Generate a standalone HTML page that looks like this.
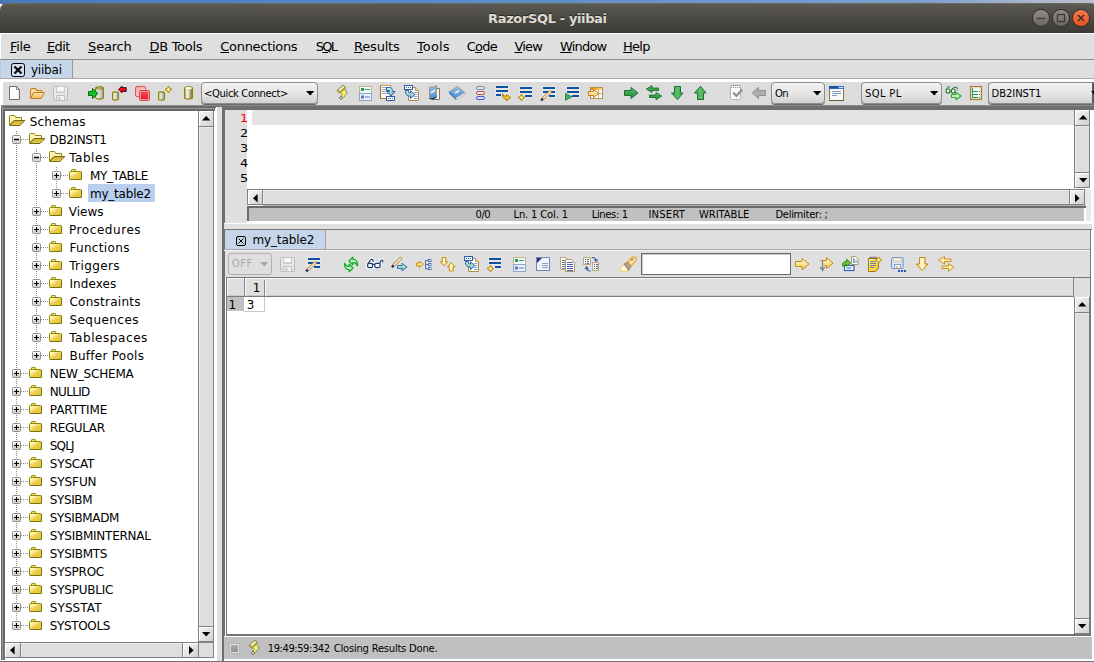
<!DOCTYPE html>
<html lang="en"><head><meta charset="utf-8"><title>RazorSQL - yiibai</title>
<style>
html,body{margin:0;padding:0;}
body{width:1094px;height:662px;overflow:hidden;background:#fff;font-family:"DejaVu Sans","Liberation Sans",sans-serif;}
#app{position:absolute;left:0;top:0;width:1094px;height:662px;overflow:hidden;background:#fff;}
#app div{position:absolute;box-sizing:border-box;}
#app svg{position:absolute;overflow:visible;}
.t{position:absolute;white-space:pre;line-height:normal;}
.t u{text-decoration:underline;text-decoration-thickness:1px;text-underline-offset:1px;}
.g{background:#dfdfdf;}
.btn{background:linear-gradient(135deg,#f4f4f4 0%,#e4e4e4 45%,#cfcfcf 100%);border-top:1px solid #fff;border-left:1px solid #fff;}
.trk{background:#dedede;border-top:1px solid #ececec;border-left:1px solid #ececec;}
.ln{background:#7a7a7a;}
.combo{border:1px solid #8c8c8c;border-radius:4px;background:linear-gradient(#f2f2f2,#e6e6e6 50%,#d2d2d2);box-shadow:0 1px 0 #6a6a6a;}

</style></head><body>
<svg width="0" height="0" style="position:absolute">
<defs>
<linearGradient id="gFold" x1="0" y1="0" x2="1" y2="1"><stop offset="0" stop-color="#ffffd8"/><stop offset="0.22" stop-color="#ffff98"/><stop offset="0.36" stop-color="#ffdc9c"/><stop offset="0.52" stop-color="#ecd048"/><stop offset="1" stop-color="#e2c232"/></linearGradient>
<linearGradient id="gFlap" x1="0" y1="0" x2="0" y2="1"><stop offset="0" stop-color="#cfae2c"/><stop offset="1" stop-color="#e8cc4c"/></linearGradient>
<linearGradient id="gBox" x1="0" y1="0" x2="0" y2="1"><stop offset="0" stop-color="#ffffff"/><stop offset="1" stop-color="#d4ccc0"/></linearGradient>
</defs>
</svg>

<div id="app">
<div style="left:0px;top:0px;width:1094px;height:4px;background:linear-gradient(90deg,#4a78ba 0%,#5f8ecb 50%,#7ea0d0 85%,#aeb8cd 95%,#b8c0d0 100%);"></div>
<div style="left:0px;top:3px;width:1097px;height:30px;border-radius:7px 7px 0 0;background:linear-gradient(#5d5b53,#4a4943 50%,#3c3b37);box-shadow:inset 0 1px 0 #6a685f;"></div>
<span class="t" style="left:488.1px;top:11px;font-size:13px;color:#dfdbd2;font-weight:bold;letter-spacing:-0.367px;text-shadow:0 -1px 0 #2a2a26;">RazorSQL - yiibai</span>
<svg style="left:1030px;top:7px" width="62" height="22" viewBox="1030 7 62 22">
<defs><linearGradient id="wb" x1="0" y1="0" x2="0" y2="1"><stop offset="0" stop-color="#908e86"/><stop offset="1" stop-color="#66645c"/></linearGradient>
<linearGradient id="wc" x1="0" y1="0" x2="0" y2="1"><stop offset="0" stop-color="#f47a4e"/><stop offset="1" stop-color="#e2501c"/></linearGradient></defs>
<circle cx="1041" cy="18" r="8.6" fill="url(#wb)" stroke="#2e2d29" stroke-width="1"/>
<circle cx="1061" cy="18" r="8.6" fill="url(#wb)" stroke="#2e2d29" stroke-width="1"/>
<circle cx="1081" cy="18" r="8.6" fill="url(#wc)" stroke="#2e2d29" stroke-width="1"/>
<path d="M1037 18.5 H1045" stroke="#3c3b37" stroke-width="1.3"/>
<rect x="1057.5" y="14.5" width="7" height="7" fill="none" stroke="#3c3b37" stroke-width="1.3"/>
<path d="M1078 15 L1084 21 M1084 15 L1078 21" stroke="#3a2a1a" stroke-width="1.4"/>
</svg>
<div style="left:0px;top:33px;width:1094px;height:1px;background:#fff;"></div>
<div class="g" style="left:1px;top:34px;width:1093px;height:25px;"></div>
<div style="left:0px;top:59px;width:1094px;height:1px;background:#8c8c8c;"></div>
<span class="t" style="left:10.1px;top:39px;font-size:13px;color:#000;letter-spacing:-0.393px;"><u>F</u>ile</span>
<span class="t" style="left:46.9px;top:39px;font-size:13px;color:#000;letter-spacing:-0.562px;"><u>E</u>dit</span>
<span class="t" style="left:88.1px;top:39px;font-size:13px;color:#000;letter-spacing:-0.218px;"><u>S</u>earch</span>
<span class="t" style="left:149.4px;top:39px;font-size:13px;color:#000;letter-spacing:-0.271px;"><u>D</u>B Tools</span>
<span class="t" style="left:220.3px;top:39px;font-size:13px;color:#000;letter-spacing:-0.304px;"><u>C</u>onnections</span>
<span class="t" style="left:315.8px;top:39px;font-size:13px;color:#000;letter-spacing:-1.824px;">S<u>Q</u>L</span>
<span class="t" style="left:354.1px;top:39px;font-size:13px;color:#000;letter-spacing:-0.226px;"><u>R</u>esults</span>
<span class="t" style="left:416.94px;top:39px;font-size:13px;color:#000;letter-spacing:0.132px;"><u>T</u>ools</span>
<span class="t" style="left:466.7px;top:39px;font-size:13px;color:#000;letter-spacing:-0.765px;">C<u>o</u>de</span>
<span class="t" style="left:514.4px;top:39px;font-size:13px;color:#000;letter-spacing:-0.754px;"><u>V</u>iew</span>
<span class="t" style="left:560.1px;top:39px;font-size:13px;color:#000;letter-spacing:-0.837px;"><u>W</u>indow</span>
<span class="t" style="left:623.1px;top:39px;font-size:13px;color:#000;letter-spacing:-0.786px;"><u>H</u>elp</span>
<div class="g" style="left:0px;top:60px;width:1094px;height:18px;"></div>
<div style="left:1px;top:60px;width:71px;height:18px;background:#c5d5ea;"></div>
<div style="left:72px;top:60px;width:1px;height:18px;background:#9a9a9a;"></div>
<div style="left:0px;top:78px;width:1094px;height:1px;background:#a8a8a8;"></div>
<svg style="left:11px;top:63px" width="14" height="14" viewBox="0 0 14 14"><rect x="0.5" y="0.5" width="13" height="13" rx="2" fill="#d2deee" stroke="#000"/><path d="M3.5 3.5 L10.5 10.5 M10.5 3.5 L3.5 10.5" stroke="#000" stroke-width="2.2"/></svg>
<span class="t" style="left:30.9px;top:63px;font-size:12px;color:#000;letter-spacing:-0.196px;">yiibai</span>
<div style="left:3px;top:82px;width:1091px;height:23px;background:#dcdcdc;"></div>
<div class="combo" style="left:201px;top:82px;width:117px;height:22px;"></div>
<span class="t" style="left:204.1px;top:88px;font-size:10px;color:#000;letter-spacing:-0.376px;">&lt;Quick Connect&gt;</span>
<svg style="left:305.5px;top:91px" width="9" height="5" viewBox="0 0 9 5"><path d="M0 0 H8.4 L4.2 4.6 Z" fill="#000"/></svg>
<div class="combo" style="left:771px;top:82px;width:54px;height:22px;"></div>
<span class="t" style="left:775.1px;top:88px;font-size:10px;color:#000;letter-spacing:-0.821px;">On</span>
<svg style="left:813px;top:91px" width="9" height="5" viewBox="0 0 9 5"><path d="M0 0 H8.4 L4.2 4.6 Z" fill="#000"/></svg>
<div class="combo" style="left:861px;top:82px;width:81px;height:22px;"></div>
<span class="t" style="left:865.1px;top:88px;font-size:10px;color:#000;letter-spacing:0.325px;">SQL PL</span>
<svg style="left:930px;top:91px" width="9" height="5" viewBox="0 0 9 5"><path d="M0 0 H8.4 L4.2 4.6 Z" fill="#000"/></svg>
<div class="combo" style="left:988px;top:82px;width:106px;height:22px;border-right:2px solid #5a5a5a;border-radius:4px 0 0 4px;"></div>
<span class="t" style="left:991.6px;top:88px;font-size:10px;color:#000;letter-spacing:-0.067px;">DB2INST1</span>
<svg style="left:1091px;top:91px" width="9" height="5" viewBox="0 0 9 5"><path d="M0 0 H8.4 L4.2 4.6 Z" fill="#000"/></svg>
<div style="left:1px;top:105px;width:216px;height:556px;background:#686868;"></div>
<div style="left:2px;top:106px;width:214px;height:555px;background:#9a9a9a;"></div>
<div style="left:1px;top:105px;width:216px;height:1px;background:#8a8a8a;"></div>
<div style="left:3px;top:106px;width:213px;height:2px;background:#686868;"></div>
<div style="left:2px;top:108px;width:214px;height:1px;background:#9a9a9a;"></div>
<div style="left:3px;top:109px;width:213px;height:552px;background:#686868;"></div>
<div style="left:5px;top:111px;width:212px;height:550px;background:#fff;"></div>
<div style="left:214px;top:107px;width:3px;height:4px;background:#6a6a6a;"></div>
<div style="left:215px;top:108px;width:2px;height:3px;background:#fff;"></div>
<div style="left:216px;top:107px;width:1px;height:1px;background:#fff;"></div>
<div style="left:217px;top:107px;width:5px;height:554px;background:#e0e0e0;"></div>
<div style="left:214px;top:105px;width:8px;height:2px;background:#6e6e6e;"></div>
<div style="left:214px;top:105px;width:8px;height:1px;background:#8a8a8a;"></div>
<div style="left:222px;top:105px;width:872px;height:556px;background:#6e6e6e;"></div>
<div style="left:222px;top:105px;width:872px;height:1px;background:#8a8a8a;"></div>
<div style="left:225px;top:110px;width:869px;height:551px;background:#fff;"></div>
<div style="left:198px;top:111px;width:16px;height:531px;background:#808080;"></div>
<div class="btn" style="left:199px;top:111px;width:14px;height:15px;"></div>
<div class="trk" style="left:199px;top:127px;width:14px;height:499px;"></div>
<div class="btn" style="left:199px;top:627px;width:14px;height:14px;"></div>
<svg style="left:202px;top:116px" width="9" height="5" viewBox="0 0 9 5"><path d="M0 4.6 H8.4 L4.2 0 Z" fill="#000"/></svg>
<svg style="left:202px;top:632px" width="9" height="5" viewBox="0 0 9 5"><path d="M0 0 H8.4 L4.2 4.6 Z" fill="#000"/></svg>
<div style="left:198px;top:642px;width:16px;height:16px;background:#808080;"></div>
<div style="left:199px;top:643px;width:14px;height:14px;background:#dedede;"></div>
<div style="left:4px;top:642px;width:195px;height:16px;background:#808080;"></div>
<div class="btn" style="left:5px;top:643px;width:15px;height:14px;"></div>
<div class="trk" style="left:21px;top:643px;width:161px;height:14px;"></div>
<div class="btn" style="left:183px;top:643px;width:15px;height:14px;"></div>
<svg style="left:10px;top:646px" width="5" height="9" viewBox="0 0 5 9"><path d="M4.6 0 V8.4 L0 4.2 Z" fill="#000"/></svg>
<svg style="left:189px;top:646px" width="5" height="9" viewBox="0 0 5 9"><path d="M0 0 V8.4 L4.6 4.2 Z" fill="#000"/></svg>
<div style="left:214px;top:111px;width:3px;height:550px;background:#fff;"></div>
<div style="left:5px;top:658px;width:212px;height:3px;background:#fff;"></div>
<div style="left:16px;top:131px;width:1px;height:494px;background-image:linear-gradient(#8c8c8c 50%,transparent 50%);background-size:1px 2px;"></div>
<div style="left:36px;top:149px;width:1px;height:206px;background-image:linear-gradient(#8c8c8c 50%,transparent 50%);background-size:1px 2px;"></div>
<div style="left:56px;top:167px;width:1px;height:26px;background-image:linear-gradient(#8c8c8c 50%,transparent 50%);background-size:1px 2px;"></div>
<svg style="left:9px;top:114px" width="16" height="16" viewBox="0 0 16 16"><path d="M0.5 11 L0.5 2.5 Q0.5 1.5 1.5 1.5 L5 1.5 Q6 1.5 6.2 2.5 L6.5 3.5 L12.5 3.5 L12.5 6.5 L5 6.5 L0.5 11 Z" fill="#fff2b4" stroke="#8c8a04" stroke-width="1"/><path d="M0.7 11.5 L5.3 6.5 L15.8 6.5 L11 11.5 Z" fill="url(#gFlap)" stroke="#6e6c1c" stroke-width="1" stroke-linejoin="round"/></svg>
<span class="t" style="left:29.7px;top:115px;font-size:12px;color:#000;letter-spacing:0.233px;">Schemas</span>
<div style="left:21px;top:139px;width:8px;height:1px;background-image:linear-gradient(90deg,#8c8c8c 50%,transparent 50%);background-size:2px 1px;"></div>
<svg style="left:12px;top:135px" width="9" height="9" viewBox="0 0 9 9"><rect x="0.5" y="0.5" width="8" height="8" rx="1" fill="url(#gBox)" stroke="#8e8e8e" stroke-width="1"/><path d="M2 4.5 H7" stroke="#000" stroke-width="1.5"/></svg>
<svg style="left:29px;top:132px" width="16" height="16" viewBox="0 0 16 16"><path d="M0.5 11 L0.5 2.5 Q0.5 1.5 1.5 1.5 L5 1.5 Q6 1.5 6.2 2.5 L6.5 3.5 L12.5 3.5 L12.5 6.5 L5 6.5 L0.5 11 Z" fill="#fff2b4" stroke="#8c8a04" stroke-width="1"/><path d="M0.7 11.5 L5.3 6.5 L15.8 6.5 L11 11.5 Z" fill="url(#gFlap)" stroke="#6e6c1c" stroke-width="1" stroke-linejoin="round"/></svg>
<span class="t" style="left:49.6px;top:133px;font-size:12px;color:#000;letter-spacing:-0.402px;">DB2INST1</span>
<div style="left:41px;top:157px;width:8px;height:1px;background-image:linear-gradient(90deg,#8c8c8c 50%,transparent 50%);background-size:2px 1px;"></div>
<svg style="left:32px;top:153px" width="9" height="9" viewBox="0 0 9 9"><rect x="0.5" y="0.5" width="8" height="8" rx="1" fill="url(#gBox)" stroke="#8e8e8e" stroke-width="1"/><path d="M2 4.5 H7" stroke="#000" stroke-width="1.5"/></svg>
<svg style="left:49px;top:150px" width="16" height="16" viewBox="0 0 16 16"><path d="M0.5 11 L0.5 2.5 Q0.5 1.5 1.5 1.5 L5 1.5 Q6 1.5 6.2 2.5 L6.5 3.5 L12.5 3.5 L12.5 6.5 L5 6.5 L0.5 11 Z" fill="#fff2b4" stroke="#8c8a04" stroke-width="1"/><path d="M0.7 11.5 L5.3 6.5 L15.8 6.5 L11 11.5 Z" fill="url(#gFlap)" stroke="#6e6c1c" stroke-width="1" stroke-linejoin="round"/></svg>
<span class="t" style="left:69.14px;top:151px;font-size:12px;color:#000;letter-spacing:0.553px;">Tables</span>
<div style="left:61px;top:175px;width:8px;height:1px;background-image:linear-gradient(90deg,#8c8c8c 50%,transparent 50%);background-size:2px 1px;"></div>
<svg style="left:52px;top:171px" width="9" height="9" viewBox="0 0 9 9"><rect x="0.5" y="0.5" width="8" height="8" rx="1" fill="url(#gBox)" stroke="#8e8e8e" stroke-width="1"/><path d="M2 4.5 H7 M4.5 2 V7" stroke="#000" stroke-width="1.15"/></svg>
<svg style="left:69px;top:168px" width="16" height="16" viewBox="0 0 16 16"><path d="M2.5 3.5 L2.5 2.2 Q2.5 1.5 3.2 1.5 L5.8 1.5 Q6.5 1.5 6.5 2.2 L6.5 3.5 Z" fill="#f4e480" stroke="#8c8a04" stroke-width="1"/><rect x="0.5" y="3.5" width="12" height="8" rx="0.8" fill="url(#gFold)" stroke="#8c8a04" stroke-width="1"/><path d="M12.5 4 V11.5 H1" fill="none" stroke="#6e6c14" stroke-width="1" opacity="0.7"/></svg>
<span class="t" style="left:89.9px;top:169px;font-size:12px;color:#000;letter-spacing:-0.328px;">MY_TABLE</span>
<div style="left:61px;top:193px;width:8px;height:1px;background-image:linear-gradient(90deg,#8c8c8c 50%,transparent 50%);background-size:2px 1px;"></div>
<svg style="left:52px;top:189px" width="9" height="9" viewBox="0 0 9 9"><rect x="0.5" y="0.5" width="8" height="8" rx="1" fill="url(#gBox)" stroke="#8e8e8e" stroke-width="1"/><path d="M2 4.5 H7 M4.5 2 V7" stroke="#000" stroke-width="1.15"/></svg>
<div style="left:88px;top:184px;width:67px;height:18px;background:#b8cfef;"></div>
<svg style="left:69px;top:186px" width="16" height="16" viewBox="0 0 16 16"><path d="M2.5 3.5 L2.5 2.2 Q2.5 1.5 3.2 1.5 L5.8 1.5 Q6.5 1.5 6.5 2.2 L6.5 3.5 Z" fill="#f4e480" stroke="#8c8a04" stroke-width="1"/><rect x="0.5" y="3.5" width="12" height="8" rx="0.8" fill="url(#gFold)" stroke="#8c8a04" stroke-width="1"/><path d="M12.5 4 V11.5 H1" fill="none" stroke="#6e6c14" stroke-width="1" opacity="0.7"/></svg>
<span class="t" style="left:89.9px;top:187px;font-size:12px;color:#000;letter-spacing:-0.191px;">my_table2</span>
<div style="left:41px;top:211px;width:8px;height:1px;background-image:linear-gradient(90deg,#8c8c8c 50%,transparent 50%);background-size:2px 1px;"></div>
<svg style="left:32px;top:207px" width="9" height="9" viewBox="0 0 9 9"><rect x="0.5" y="0.5" width="8" height="8" rx="1" fill="url(#gBox)" stroke="#8e8e8e" stroke-width="1"/><path d="M2 4.5 H7 M4.5 2 V7" stroke="#000" stroke-width="1.15"/></svg>
<svg style="left:49px;top:204px" width="16" height="16" viewBox="0 0 16 16"><path d="M2.5 3.5 L2.5 2.2 Q2.5 1.5 3.2 1.5 L5.8 1.5 Q6.5 1.5 6.5 2.2 L6.5 3.5 Z" fill="#f4e480" stroke="#8c8a04" stroke-width="1"/><rect x="0.5" y="3.5" width="12" height="8" rx="0.8" fill="url(#gFold)" stroke="#8c8a04" stroke-width="1"/><path d="M12.5 4 V11.5 H1" fill="none" stroke="#6e6c14" stroke-width="1" opacity="0.7"/></svg>
<span class="t" style="left:68.8px;top:205px;font-size:12px;color:#000;letter-spacing:0.016px;">Views</span>
<div style="left:41px;top:229px;width:8px;height:1px;background-image:linear-gradient(90deg,#8c8c8c 50%,transparent 50%);background-size:2px 1px;"></div>
<svg style="left:32px;top:225px" width="9" height="9" viewBox="0 0 9 9"><rect x="0.5" y="0.5" width="8" height="8" rx="1" fill="url(#gBox)" stroke="#8e8e8e" stroke-width="1"/><path d="M2 4.5 H7 M4.5 2 V7" stroke="#000" stroke-width="1.15"/></svg>
<svg style="left:49px;top:222px" width="16" height="16" viewBox="0 0 16 16"><path d="M2.5 3.5 L2.5 2.2 Q2.5 1.5 3.2 1.5 L5.8 1.5 Q6.5 1.5 6.5 2.2 L6.5 3.5 Z" fill="#f4e480" stroke="#8c8a04" stroke-width="1"/><rect x="0.5" y="3.5" width="12" height="8" rx="0.8" fill="url(#gFold)" stroke="#8c8a04" stroke-width="1"/><path d="M12.5 4 V11.5 H1" fill="none" stroke="#6e6c14" stroke-width="1" opacity="0.7"/></svg>
<span class="t" style="left:69.0px;top:223px;font-size:12px;color:#000;letter-spacing:0.561px;">Procedures</span>
<div style="left:41px;top:247px;width:8px;height:1px;background-image:linear-gradient(90deg,#8c8c8c 50%,transparent 50%);background-size:2px 1px;"></div>
<svg style="left:32px;top:243px" width="9" height="9" viewBox="0 0 9 9"><rect x="0.5" y="0.5" width="8" height="8" rx="1" fill="url(#gBox)" stroke="#8e8e8e" stroke-width="1"/><path d="M2 4.5 H7 M4.5 2 V7" stroke="#000" stroke-width="1.15"/></svg>
<svg style="left:49px;top:240px" width="16" height="16" viewBox="0 0 16 16"><path d="M2.5 3.5 L2.5 2.2 Q2.5 1.5 3.2 1.5 L5.8 1.5 Q6.5 1.5 6.5 2.2 L6.5 3.5 Z" fill="#f4e480" stroke="#8c8a04" stroke-width="1"/><rect x="0.5" y="3.5" width="12" height="8" rx="0.8" fill="url(#gFold)" stroke="#8c8a04" stroke-width="1"/><path d="M12.5 4 V11.5 H1" fill="none" stroke="#6e6c14" stroke-width="1" opacity="0.7"/></svg>
<span class="t" style="left:69.4px;top:241px;font-size:12px;color:#000;letter-spacing:0.338px;">Functions</span>
<div style="left:41px;top:265px;width:8px;height:1px;background-image:linear-gradient(90deg,#8c8c8c 50%,transparent 50%);background-size:2px 1px;"></div>
<svg style="left:32px;top:261px" width="9" height="9" viewBox="0 0 9 9"><rect x="0.5" y="0.5" width="8" height="8" rx="1" fill="url(#gBox)" stroke="#8e8e8e" stroke-width="1"/><path d="M2 4.5 H7 M4.5 2 V7" stroke="#000" stroke-width="1.15"/></svg>
<svg style="left:49px;top:258px" width="16" height="16" viewBox="0 0 16 16"><path d="M2.5 3.5 L2.5 2.2 Q2.5 1.5 3.2 1.5 L5.8 1.5 Q6.5 1.5 6.5 2.2 L6.5 3.5 Z" fill="#f4e480" stroke="#8c8a04" stroke-width="1"/><rect x="0.5" y="3.5" width="12" height="8" rx="0.8" fill="url(#gFold)" stroke="#8c8a04" stroke-width="1"/><path d="M12.5 4 V11.5 H1" fill="none" stroke="#6e6c14" stroke-width="1" opacity="0.7"/></svg>
<span class="t" style="left:69.14px;top:259px;font-size:12px;color:#000;letter-spacing:0.389px;">Triggers</span>
<div style="left:41px;top:283px;width:8px;height:1px;background-image:linear-gradient(90deg,#8c8c8c 50%,transparent 50%);background-size:2px 1px;"></div>
<svg style="left:32px;top:279px" width="9" height="9" viewBox="0 0 9 9"><rect x="0.5" y="0.5" width="8" height="8" rx="1" fill="url(#gBox)" stroke="#8e8e8e" stroke-width="1"/><path d="M2 4.5 H7 M4.5 2 V7" stroke="#000" stroke-width="1.15"/></svg>
<svg style="left:49px;top:276px" width="16" height="16" viewBox="0 0 16 16"><path d="M2.5 3.5 L2.5 2.2 Q2.5 1.5 3.2 1.5 L5.8 1.5 Q6.5 1.5 6.5 2.2 L6.5 3.5 Z" fill="#f4e480" stroke="#8c8a04" stroke-width="1"/><rect x="0.5" y="3.5" width="12" height="8" rx="0.8" fill="url(#gFold)" stroke="#8c8a04" stroke-width="1"/><path d="M12.5 4 V11.5 H1" fill="none" stroke="#6e6c14" stroke-width="1" opacity="0.7"/></svg>
<span class="t" style="left:69.4px;top:277px;font-size:12px;color:#000;letter-spacing:0.098px;">Indexes</span>
<div style="left:41px;top:301px;width:8px;height:1px;background-image:linear-gradient(90deg,#8c8c8c 50%,transparent 50%);background-size:2px 1px;"></div>
<svg style="left:32px;top:297px" width="9" height="9" viewBox="0 0 9 9"><rect x="0.5" y="0.5" width="8" height="8" rx="1" fill="url(#gBox)" stroke="#8e8e8e" stroke-width="1"/><path d="M2 4.5 H7 M4.5 2 V7" stroke="#000" stroke-width="1.15"/></svg>
<svg style="left:49px;top:294px" width="16" height="16" viewBox="0 0 16 16"><path d="M2.5 3.5 L2.5 2.2 Q2.5 1.5 3.2 1.5 L5.8 1.5 Q6.5 1.5 6.5 2.2 L6.5 3.5 Z" fill="#f4e480" stroke="#8c8a04" stroke-width="1"/><rect x="0.5" y="3.5" width="12" height="8" rx="0.8" fill="url(#gFold)" stroke="#8c8a04" stroke-width="1"/><path d="M12.5 4 V11.5 H1" fill="none" stroke="#6e6c14" stroke-width="1" opacity="0.7"/></svg>
<span class="t" style="left:69.4px;top:295px;font-size:12px;color:#000;letter-spacing:0.273px;">Constraints</span>
<div style="left:41px;top:319px;width:8px;height:1px;background-image:linear-gradient(90deg,#8c8c8c 50%,transparent 50%);background-size:2px 1px;"></div>
<svg style="left:32px;top:315px" width="9" height="9" viewBox="0 0 9 9"><rect x="0.5" y="0.5" width="8" height="8" rx="1" fill="url(#gBox)" stroke="#8e8e8e" stroke-width="1"/><path d="M2 4.5 H7 M4.5 2 V7" stroke="#000" stroke-width="1.15"/></svg>
<svg style="left:49px;top:312px" width="16" height="16" viewBox="0 0 16 16"><path d="M2.5 3.5 L2.5 2.2 Q2.5 1.5 3.2 1.5 L5.8 1.5 Q6.5 1.5 6.5 2.2 L6.5 3.5 Z" fill="#f4e480" stroke="#8c8a04" stroke-width="1"/><rect x="0.5" y="3.5" width="12" height="8" rx="0.8" fill="url(#gFold)" stroke="#8c8a04" stroke-width="1"/><path d="M12.5 4 V11.5 H1" fill="none" stroke="#6e6c14" stroke-width="1" opacity="0.7"/></svg>
<span class="t" style="left:69.4px;top:313px;font-size:12px;color:#000;letter-spacing:0.456px;">Sequences</span>
<div style="left:41px;top:337px;width:8px;height:1px;background-image:linear-gradient(90deg,#8c8c8c 50%,transparent 50%);background-size:2px 1px;"></div>
<svg style="left:32px;top:333px" width="9" height="9" viewBox="0 0 9 9"><rect x="0.5" y="0.5" width="8" height="8" rx="1" fill="url(#gBox)" stroke="#8e8e8e" stroke-width="1"/><path d="M2 4.5 H7 M4.5 2 V7" stroke="#000" stroke-width="1.15"/></svg>
<svg style="left:49px;top:330px" width="16" height="16" viewBox="0 0 16 16"><path d="M2.5 3.5 L2.5 2.2 Q2.5 1.5 3.2 1.5 L5.8 1.5 Q6.5 1.5 6.5 2.2 L6.5 3.5 Z" fill="#f4e480" stroke="#8c8a04" stroke-width="1"/><rect x="0.5" y="3.5" width="12" height="8" rx="0.8" fill="url(#gFold)" stroke="#8c8a04" stroke-width="1"/><path d="M12.5 4 V11.5 H1" fill="none" stroke="#6e6c14" stroke-width="1" opacity="0.7"/></svg>
<span class="t" style="left:69.14px;top:331px;font-size:12px;color:#000;letter-spacing:0.576px;">Tablespaces</span>
<div style="left:41px;top:355px;width:8px;height:1px;background-image:linear-gradient(90deg,#8c8c8c 50%,transparent 50%);background-size:2px 1px;"></div>
<svg style="left:32px;top:351px" width="9" height="9" viewBox="0 0 9 9"><rect x="0.5" y="0.5" width="8" height="8" rx="1" fill="url(#gBox)" stroke="#8e8e8e" stroke-width="1"/><path d="M2 4.5 H7 M4.5 2 V7" stroke="#000" stroke-width="1.15"/></svg>
<svg style="left:49px;top:348px" width="16" height="16" viewBox="0 0 16 16"><path d="M2.5 3.5 L2.5 2.2 Q2.5 1.5 3.2 1.5 L5.8 1.5 Q6.5 1.5 6.5 2.2 L6.5 3.5 Z" fill="#f4e480" stroke="#8c8a04" stroke-width="1"/><rect x="0.5" y="3.5" width="12" height="8" rx="0.8" fill="url(#gFold)" stroke="#8c8a04" stroke-width="1"/><path d="M12.5 4 V11.5 H1" fill="none" stroke="#6e6c14" stroke-width="1" opacity="0.7"/></svg>
<span class="t" style="left:69.4px;top:349px;font-size:12px;color:#000;letter-spacing:0.279px;">Buffer Pools</span>
<div style="left:21px;top:373px;width:8px;height:1px;background-image:linear-gradient(90deg,#8c8c8c 50%,transparent 50%);background-size:2px 1px;"></div>
<svg style="left:12px;top:369px" width="9" height="9" viewBox="0 0 9 9"><rect x="0.5" y="0.5" width="8" height="8" rx="1" fill="url(#gBox)" stroke="#8e8e8e" stroke-width="1"/><path d="M2 4.5 H7 M4.5 2 V7" stroke="#000" stroke-width="1.15"/></svg>
<svg style="left:29px;top:366px" width="16" height="16" viewBox="0 0 16 16"><path d="M2.5 3.5 L2.5 2.2 Q2.5 1.5 3.2 1.5 L5.8 1.5 Q6.5 1.5 6.5 2.2 L6.5 3.5 Z" fill="#f4e480" stroke="#8c8a04" stroke-width="1"/><rect x="0.5" y="3.5" width="12" height="8" rx="0.8" fill="url(#gFold)" stroke="#8c8a04" stroke-width="1"/><path d="M12.5 4 V11.5 H1" fill="none" stroke="#6e6c14" stroke-width="1" opacity="0.7"/></svg>
<span class="t" style="left:49.8px;top:367px;font-size:12px;color:#000;letter-spacing:-0.177px;">NEW_SCHEMA</span>
<div style="left:21px;top:391px;width:8px;height:1px;background-image:linear-gradient(90deg,#8c8c8c 50%,transparent 50%);background-size:2px 1px;"></div>
<svg style="left:12px;top:387px" width="9" height="9" viewBox="0 0 9 9"><rect x="0.5" y="0.5" width="8" height="8" rx="1" fill="url(#gBox)" stroke="#8e8e8e" stroke-width="1"/><path d="M2 4.5 H7 M4.5 2 V7" stroke="#000" stroke-width="1.15"/></svg>
<svg style="left:29px;top:384px" width="16" height="16" viewBox="0 0 16 16"><path d="M2.5 3.5 L2.5 2.2 Q2.5 1.5 3.2 1.5 L5.8 1.5 Q6.5 1.5 6.5 2.2 L6.5 3.5 Z" fill="#f4e480" stroke="#8c8a04" stroke-width="1"/><rect x="0.5" y="3.5" width="12" height="8" rx="0.8" fill="url(#gFold)" stroke="#8c8a04" stroke-width="1"/><path d="M12.5 4 V11.5 H1" fill="none" stroke="#6e6c14" stroke-width="1" opacity="0.7"/></svg>
<span class="t" style="left:49.8px;top:385px;font-size:12px;color:#000;letter-spacing:-0.684px;">NULLID</span>
<div style="left:21px;top:409px;width:8px;height:1px;background-image:linear-gradient(90deg,#8c8c8c 50%,transparent 50%);background-size:2px 1px;"></div>
<svg style="left:12px;top:405px" width="9" height="9" viewBox="0 0 9 9"><rect x="0.5" y="0.5" width="8" height="8" rx="1" fill="url(#gBox)" stroke="#8e8e8e" stroke-width="1"/><path d="M2 4.5 H7 M4.5 2 V7" stroke="#000" stroke-width="1.15"/></svg>
<svg style="left:29px;top:402px" width="16" height="16" viewBox="0 0 16 16"><path d="M2.5 3.5 L2.5 2.2 Q2.5 1.5 3.2 1.5 L5.8 1.5 Q6.5 1.5 6.5 2.2 L6.5 3.5 Z" fill="#f4e480" stroke="#8c8a04" stroke-width="1"/><rect x="0.5" y="3.5" width="12" height="8" rx="0.8" fill="url(#gFold)" stroke="#8c8a04" stroke-width="1"/><path d="M12.5 4 V11.5 H1" fill="none" stroke="#6e6c14" stroke-width="1" opacity="0.7"/></svg>
<span class="t" style="left:49.8px;top:403px;font-size:12px;color:#000;letter-spacing:-0.069px;">PARTTIME</span>
<div style="left:21px;top:427px;width:8px;height:1px;background-image:linear-gradient(90deg,#8c8c8c 50%,transparent 50%);background-size:2px 1px;"></div>
<svg style="left:12px;top:423px" width="9" height="9" viewBox="0 0 9 9"><rect x="0.5" y="0.5" width="8" height="8" rx="1" fill="url(#gBox)" stroke="#8e8e8e" stroke-width="1"/><path d="M2 4.5 H7 M4.5 2 V7" stroke="#000" stroke-width="1.15"/></svg>
<svg style="left:29px;top:420px" width="16" height="16" viewBox="0 0 16 16"><path d="M2.5 3.5 L2.5 2.2 Q2.5 1.5 3.2 1.5 L5.8 1.5 Q6.5 1.5 6.5 2.2 L6.5 3.5 Z" fill="#f4e480" stroke="#8c8a04" stroke-width="1"/><rect x="0.5" y="3.5" width="12" height="8" rx="0.8" fill="url(#gFold)" stroke="#8c8a04" stroke-width="1"/><path d="M12.5 4 V11.5 H1" fill="none" stroke="#6e6c14" stroke-width="1" opacity="0.7"/></svg>
<span class="t" style="left:49.8px;top:421px;font-size:12px;color:#000;letter-spacing:-0.386px;">REGULAR</span>
<div style="left:21px;top:445px;width:8px;height:1px;background-image:linear-gradient(90deg,#8c8c8c 50%,transparent 50%);background-size:2px 1px;"></div>
<svg style="left:12px;top:441px" width="9" height="9" viewBox="0 0 9 9"><rect x="0.5" y="0.5" width="8" height="8" rx="1" fill="url(#gBox)" stroke="#8e8e8e" stroke-width="1"/><path d="M2 4.5 H7 M4.5 2 V7" stroke="#000" stroke-width="1.15"/></svg>
<svg style="left:29px;top:438px" width="16" height="16" viewBox="0 0 16 16"><path d="M2.5 3.5 L2.5 2.2 Q2.5 1.5 3.2 1.5 L5.8 1.5 Q6.5 1.5 6.5 2.2 L6.5 3.5 Z" fill="#f4e480" stroke="#8c8a04" stroke-width="1"/><rect x="0.5" y="3.5" width="12" height="8" rx="0.8" fill="url(#gFold)" stroke="#8c8a04" stroke-width="1"/><path d="M12.5 4 V11.5 H1" fill="none" stroke="#6e6c14" stroke-width="1" opacity="0.7"/></svg>
<span class="t" style="left:49.8px;top:439px;font-size:12px;color:#000;letter-spacing:-0.833px;">SQLJ</span>
<div style="left:21px;top:463px;width:8px;height:1px;background-image:linear-gradient(90deg,#8c8c8c 50%,transparent 50%);background-size:2px 1px;"></div>
<svg style="left:12px;top:459px" width="9" height="9" viewBox="0 0 9 9"><rect x="0.5" y="0.5" width="8" height="8" rx="1" fill="url(#gBox)" stroke="#8e8e8e" stroke-width="1"/><path d="M2 4.5 H7 M4.5 2 V7" stroke="#000" stroke-width="1.15"/></svg>
<svg style="left:29px;top:456px" width="16" height="16" viewBox="0 0 16 16"><path d="M2.5 3.5 L2.5 2.2 Q2.5 1.5 3.2 1.5 L5.8 1.5 Q6.5 1.5 6.5 2.2 L6.5 3.5 Z" fill="#f4e480" stroke="#8c8a04" stroke-width="1"/><rect x="0.5" y="3.5" width="12" height="8" rx="0.8" fill="url(#gFold)" stroke="#8c8a04" stroke-width="1"/><path d="M12.5 4 V11.5 H1" fill="none" stroke="#6e6c14" stroke-width="1" opacity="0.7"/></svg>
<span class="t" style="left:49.8px;top:457px;font-size:12px;color:#000;letter-spacing:-0.180px;">SYSCAT</span>
<div style="left:21px;top:481px;width:8px;height:1px;background-image:linear-gradient(90deg,#8c8c8c 50%,transparent 50%);background-size:2px 1px;"></div>
<svg style="left:12px;top:477px" width="9" height="9" viewBox="0 0 9 9"><rect x="0.5" y="0.5" width="8" height="8" rx="1" fill="url(#gBox)" stroke="#8e8e8e" stroke-width="1"/><path d="M2 4.5 H7 M4.5 2 V7" stroke="#000" stroke-width="1.15"/></svg>
<svg style="left:29px;top:474px" width="16" height="16" viewBox="0 0 16 16"><path d="M2.5 3.5 L2.5 2.2 Q2.5 1.5 3.2 1.5 L5.8 1.5 Q6.5 1.5 6.5 2.2 L6.5 3.5 Z" fill="#f4e480" stroke="#8c8a04" stroke-width="1"/><rect x="0.5" y="3.5" width="12" height="8" rx="0.8" fill="url(#gFold)" stroke="#8c8a04" stroke-width="1"/><path d="M12.5 4 V11.5 H1" fill="none" stroke="#6e6c14" stroke-width="1" opacity="0.7"/></svg>
<span class="t" style="left:49.8px;top:475px;font-size:12px;color:#000;letter-spacing:-0.087px;">SYSFUN</span>
<div style="left:21px;top:499px;width:8px;height:1px;background-image:linear-gradient(90deg,#8c8c8c 50%,transparent 50%);background-size:2px 1px;"></div>
<svg style="left:12px;top:495px" width="9" height="9" viewBox="0 0 9 9"><rect x="0.5" y="0.5" width="8" height="8" rx="1" fill="url(#gBox)" stroke="#8e8e8e" stroke-width="1"/><path d="M2 4.5 H7 M4.5 2 V7" stroke="#000" stroke-width="1.15"/></svg>
<svg style="left:29px;top:492px" width="16" height="16" viewBox="0 0 16 16"><path d="M2.5 3.5 L2.5 2.2 Q2.5 1.5 3.2 1.5 L5.8 1.5 Q6.5 1.5 6.5 2.2 L6.5 3.5 Z" fill="#f4e480" stroke="#8c8a04" stroke-width="1"/><rect x="0.5" y="3.5" width="12" height="8" rx="0.8" fill="url(#gFold)" stroke="#8c8a04" stroke-width="1"/><path d="M12.5 4 V11.5 H1" fill="none" stroke="#6e6c14" stroke-width="1" opacity="0.7"/></svg>
<span class="t" style="left:49.8px;top:493px;font-size:12px;color:#000;letter-spacing:-0.401px;">SYSIBM</span>
<div style="left:21px;top:517px;width:8px;height:1px;background-image:linear-gradient(90deg,#8c8c8c 50%,transparent 50%);background-size:2px 1px;"></div>
<svg style="left:12px;top:513px" width="9" height="9" viewBox="0 0 9 9"><rect x="0.5" y="0.5" width="8" height="8" rx="1" fill="url(#gBox)" stroke="#8e8e8e" stroke-width="1"/><path d="M2 4.5 H7 M4.5 2 V7" stroke="#000" stroke-width="1.15"/></svg>
<svg style="left:29px;top:510px" width="16" height="16" viewBox="0 0 16 16"><path d="M2.5 3.5 L2.5 2.2 Q2.5 1.5 3.2 1.5 L5.8 1.5 Q6.5 1.5 6.5 2.2 L6.5 3.5 Z" fill="#f4e480" stroke="#8c8a04" stroke-width="1"/><rect x="0.5" y="3.5" width="12" height="8" rx="0.8" fill="url(#gFold)" stroke="#8c8a04" stroke-width="1"/><path d="M12.5 4 V11.5 H1" fill="none" stroke="#6e6c14" stroke-width="1" opacity="0.7"/></svg>
<span class="t" style="left:49.8px;top:511px;font-size:12px;color:#000;letter-spacing:-0.363px;">SYSIBMADM</span>
<div style="left:21px;top:535px;width:8px;height:1px;background-image:linear-gradient(90deg,#8c8c8c 50%,transparent 50%);background-size:2px 1px;"></div>
<svg style="left:12px;top:531px" width="9" height="9" viewBox="0 0 9 9"><rect x="0.5" y="0.5" width="8" height="8" rx="1" fill="url(#gBox)" stroke="#8e8e8e" stroke-width="1"/><path d="M2 4.5 H7 M4.5 2 V7" stroke="#000" stroke-width="1.15"/></svg>
<svg style="left:29px;top:528px" width="16" height="16" viewBox="0 0 16 16"><path d="M2.5 3.5 L2.5 2.2 Q2.5 1.5 3.2 1.5 L5.8 1.5 Q6.5 1.5 6.5 2.2 L6.5 3.5 Z" fill="#f4e480" stroke="#8c8a04" stroke-width="1"/><rect x="0.5" y="3.5" width="12" height="8" rx="0.8" fill="url(#gFold)" stroke="#8c8a04" stroke-width="1"/><path d="M12.5 4 V11.5 H1" fill="none" stroke="#6e6c14" stroke-width="1" opacity="0.7"/></svg>
<span class="t" style="left:49.8px;top:529px;font-size:12px;color:#000;letter-spacing:-0.241px;">SYSIBMINTERNAL</span>
<div style="left:21px;top:553px;width:8px;height:1px;background-image:linear-gradient(90deg,#8c8c8c 50%,transparent 50%);background-size:2px 1px;"></div>
<svg style="left:12px;top:549px" width="9" height="9" viewBox="0 0 9 9"><rect x="0.5" y="0.5" width="8" height="8" rx="1" fill="url(#gBox)" stroke="#8e8e8e" stroke-width="1"/><path d="M2 4.5 H7 M4.5 2 V7" stroke="#000" stroke-width="1.15"/></svg>
<svg style="left:29px;top:546px" width="16" height="16" viewBox="0 0 16 16"><path d="M2.5 3.5 L2.5 2.2 Q2.5 1.5 3.2 1.5 L5.8 1.5 Q6.5 1.5 6.5 2.2 L6.5 3.5 Z" fill="#f4e480" stroke="#8c8a04" stroke-width="1"/><rect x="0.5" y="3.5" width="12" height="8" rx="0.8" fill="url(#gFold)" stroke="#8c8a04" stroke-width="1"/><path d="M12.5 4 V11.5 H1" fill="none" stroke="#6e6c14" stroke-width="1" opacity="0.7"/></svg>
<span class="t" style="left:49.8px;top:547px;font-size:12px;color:#000;letter-spacing:-0.292px;">SYSIBMTS</span>
<div style="left:21px;top:571px;width:8px;height:1px;background-image:linear-gradient(90deg,#8c8c8c 50%,transparent 50%);background-size:2px 1px;"></div>
<svg style="left:12px;top:567px" width="9" height="9" viewBox="0 0 9 9"><rect x="0.5" y="0.5" width="8" height="8" rx="1" fill="url(#gBox)" stroke="#8e8e8e" stroke-width="1"/><path d="M2 4.5 H7 M4.5 2 V7" stroke="#000" stroke-width="1.15"/></svg>
<svg style="left:29px;top:564px" width="16" height="16" viewBox="0 0 16 16"><path d="M2.5 3.5 L2.5 2.2 Q2.5 1.5 3.2 1.5 L5.8 1.5 Q6.5 1.5 6.5 2.2 L6.5 3.5 Z" fill="#f4e480" stroke="#8c8a04" stroke-width="1"/><rect x="0.5" y="3.5" width="12" height="8" rx="0.8" fill="url(#gFold)" stroke="#8c8a04" stroke-width="1"/><path d="M12.5 4 V11.5 H1" fill="none" stroke="#6e6c14" stroke-width="1" opacity="0.7"/></svg>
<span class="t" style="left:49.8px;top:565px;font-size:12px;color:#000;letter-spacing:-0.261px;">SYSPROC</span>
<div style="left:21px;top:589px;width:8px;height:1px;background-image:linear-gradient(90deg,#8c8c8c 50%,transparent 50%);background-size:2px 1px;"></div>
<svg style="left:12px;top:585px" width="9" height="9" viewBox="0 0 9 9"><rect x="0.5" y="0.5" width="8" height="8" rx="1" fill="url(#gBox)" stroke="#8e8e8e" stroke-width="1"/><path d="M2 4.5 H7 M4.5 2 V7" stroke="#000" stroke-width="1.15"/></svg>
<svg style="left:29px;top:582px" width="16" height="16" viewBox="0 0 16 16"><path d="M2.5 3.5 L2.5 2.2 Q2.5 1.5 3.2 1.5 L5.8 1.5 Q6.5 1.5 6.5 2.2 L6.5 3.5 Z" fill="#f4e480" stroke="#8c8a04" stroke-width="1"/><rect x="0.5" y="3.5" width="12" height="8" rx="0.8" fill="url(#gFold)" stroke="#8c8a04" stroke-width="1"/><path d="M12.5 4 V11.5 H1" fill="none" stroke="#6e6c14" stroke-width="1" opacity="0.7"/></svg>
<span class="t" style="left:49.8px;top:583px;font-size:12px;color:#000;letter-spacing:-0.215px;">SYSPUBLIC</span>
<div style="left:21px;top:607px;width:8px;height:1px;background-image:linear-gradient(90deg,#8c8c8c 50%,transparent 50%);background-size:2px 1px;"></div>
<svg style="left:12px;top:603px" width="9" height="9" viewBox="0 0 9 9"><rect x="0.5" y="0.5" width="8" height="8" rx="1" fill="url(#gBox)" stroke="#8e8e8e" stroke-width="1"/><path d="M2 4.5 H7 M4.5 2 V7" stroke="#000" stroke-width="1.15"/></svg>
<svg style="left:29px;top:600px" width="16" height="16" viewBox="0 0 16 16"><path d="M2.5 3.5 L2.5 2.2 Q2.5 1.5 3.2 1.5 L5.8 1.5 Q6.5 1.5 6.5 2.2 L6.5 3.5 Z" fill="#f4e480" stroke="#8c8a04" stroke-width="1"/><rect x="0.5" y="3.5" width="12" height="8" rx="0.8" fill="url(#gFold)" stroke="#8c8a04" stroke-width="1"/><path d="M12.5 4 V11.5 H1" fill="none" stroke="#6e6c14" stroke-width="1" opacity="0.7"/></svg>
<span class="t" style="left:49.8px;top:601px;font-size:12px;color:#000;letter-spacing:0.079px;">SYSSTAT</span>
<div style="left:21px;top:625px;width:8px;height:1px;background-image:linear-gradient(90deg,#8c8c8c 50%,transparent 50%);background-size:2px 1px;"></div>
<svg style="left:12px;top:621px" width="9" height="9" viewBox="0 0 9 9"><rect x="0.5" y="0.5" width="8" height="8" rx="1" fill="url(#gBox)" stroke="#8e8e8e" stroke-width="1"/><path d="M2 4.5 H7 M4.5 2 V7" stroke="#000" stroke-width="1.15"/></svg>
<svg style="left:29px;top:618px" width="16" height="16" viewBox="0 0 16 16"><path d="M2.5 3.5 L2.5 2.2 Q2.5 1.5 3.2 1.5 L5.8 1.5 Q6.5 1.5 6.5 2.2 L6.5 3.5 Z" fill="#f4e480" stroke="#8c8a04" stroke-width="1"/><rect x="0.5" y="3.5" width="12" height="8" rx="0.8" fill="url(#gFold)" stroke="#8c8a04" stroke-width="1"/><path d="M12.5 4 V11.5 H1" fill="none" stroke="#6e6c14" stroke-width="1" opacity="0.7"/></svg>
<span class="t" style="left:49.8px;top:619px;font-size:12px;color:#000;letter-spacing:-0.357px;">SYSTOOLS</span>
<div style="left:225px;top:110px;width:22px;height:113px;background:#dfdfdf;"></div>
<div style="left:252px;top:110px;width:822px;height:15px;background:#e4e4e4;"></div>
<span class="t" style="left:239.6px;top:112px;font-size:11px;color:#ff0000;transform:scaleX(1.17);transform-origin:0 0;">1</span>
<span class="t" style="left:239.6px;top:127px;font-size:11px;color:#000;transform:scaleX(1.17);transform-origin:0 0;">2</span>
<span class="t" style="left:239.6px;top:142px;font-size:11px;color:#000;transform:scaleX(1.17);transform-origin:0 0;">3</span>
<span class="t" style="left:239.6px;top:157px;font-size:11px;color:#000;transform:scaleX(1.17);transform-origin:0 0;">4</span>
<span class="t" style="left:239.6px;top:172px;font-size:11px;color:#000;transform:scaleX(1.17);transform-origin:0 0;">5</span>
<div style="left:1074px;top:110px;width:16px;height:78px;background:#808080;"></div>
<div class="btn" style="left:1075px;top:110px;width:14px;height:15px;"></div>
<div class="trk" style="left:1075px;top:126px;width:14px;height:46px;"></div>
<div class="btn" style="left:1075px;top:173px;width:14px;height:14px;"></div>
<svg style="left:1079px;top:115px" width="9" height="5" viewBox="0 0 9 5"><path d="M0 4.6 H8.4 L4.2 0 Z" fill="#000"/></svg>
<svg style="left:1079px;top:178px" width="9" height="5" viewBox="0 0 9 5"><path d="M0 0 H8.4 L4.2 4.6 Z" fill="#000"/></svg>
<div style="left:1090px;top:110px;width:4px;height:112px;background:#fff;"></div>
<div style="left:247px;top:189px;width:838px;height:16px;background:#808080;"></div>
<div class="btn" style="left:248px;top:190px;width:14px;height:14px;"></div>
<div class="trk" style="left:263px;top:190px;width:806px;height:14px;"></div>
<div class="btn" style="left:1070px;top:190px;width:14px;height:14px;"></div>
<svg style="left:253px;top:194px" width="5" height="9" viewBox="0 0 5 9"><path d="M4.6 0 V8.4 L0 4.2 Z" fill="#000"/></svg>
<svg style="left:1075px;top:194px" width="5" height="9" viewBox="0 0 5 9"><path d="M0 0 V8.4 L4.6 4.2 Z" fill="#000"/></svg>
<div style="left:1085px;top:189px;width:6px;height:34px;background:#e8e8e8;"></div>
<div style="left:247px;top:205px;width:839px;height:1px;background:#b4b4b4;"></div>
<div style="left:247px;top:205px;width:16px;height:1px;background:#f4f4f4;"></div>
<div style="left:247px;top:206px;width:839px;height:15px;background:#6a6a6a;"></div>
<div style="left:249px;top:208px;width:835px;height:13px;background:#c0c0c0;"></div>
<div style="left:1084px;top:208px;width:2px;height:13px;background:#fff;"></div>
<span class="t" style="left:475.6px;top:209px;font-size:10px;color:#000;letter-spacing:-0.546px;">0/0</span>
<span class="t" style="left:513.5px;top:209px;font-size:10px;color:#000;letter-spacing:-0.173px;">Ln. 1 Col. 1</span>
<span class="t" style="left:591.7px;top:209px;font-size:10px;color:#000;letter-spacing:-0.352px;">Lines: 1</span>
<span class="t" style="left:648.4px;top:209px;font-size:10px;color:#000;letter-spacing:0.226px;">INSERT</span>
<span class="t" style="left:698.9px;top:209px;font-size:10px;color:#000;letter-spacing:-0.046px;">WRITABLE</span>
<span class="t" style="left:775.4px;top:209px;font-size:10px;color:#000;letter-spacing:-0.296px;">Delimiter: ;</span>
<div style="left:249px;top:221px;width:842px;height:2px;background:#fff;"></div>
<div style="left:224px;top:223px;width:867px;height:1px;background:#fff;"></div>
<div style="left:224px;top:224px;width:868px;height:5px;background:#e0e0e0;"></div>
<div style="left:224px;top:229px;width:868px;height:1px;background:#7a7a7a;"></div>
<div class="g" style="left:225px;top:230px;width:865px;height:406px;"></div>
<div style="left:225px;top:277px;width:1px;height:359px;background:#fff;"></div>
<div style="left:1090px;top:230px;width:1px;height:407px;background:#7a7a7a;"></div>
<div style="left:1091px;top:230px;width:3px;height:431px;background:#fff;"></div>
<div style="left:225px;top:230px;width:100px;height:19px;background:#c5d5ea;"></div>
<div style="left:325px;top:230px;width:1px;height:19px;background:#a0a0a0;"></div>
<div style="left:224px;top:249px;width:866px;height:1px;background:#a8a8a8;"></div>
<div style="left:224px;top:250px;width:866px;height:1px;background:#f4f4f4;"></div>
<svg style="left:236px;top:236px" width="10" height="10" viewBox="0 0 10 10"><rect x="0.5" y="0.5" width="9" height="9" rx="1.5" fill="none" stroke="#000"/><path d="M2.5 2.5 L7.5 7.5 M7.5 2.5 L2.5 7.5" stroke="#000" stroke-width="1"/></svg>
<span class="t" style="left:252.4px;top:233px;font-size:12px;color:#000;letter-spacing:-0.116px;">my_table2</span>
<div class="combo" style="left:228px;top:253px;width:44px;height:22px;border-color:#b0b0b0;background:#dfdfdf;box-shadow:none;border-radius:3px;"></div>
<span class="t" style="left:231.8px;top:258px;font-size:10px;color:#a8a8a8;letter-spacing:0.514px;">OFF</span>
<svg style="left:259.5px;top:262px" width="9" height="5" viewBox="0 0 9 5"><path d="M0 0 H8.4 L4.2 4.6 Z" fill="#a8a8a8"/></svg>
<div style="left:641px;top:253px;width:150px;height:22px;background:#fff;border:1px solid #6a6a6a;box-shadow:inset 1px 1px 0 #c8c8c8;"></div>
<div style="left:226px;top:277px;width:865px;height:359px;background:#767676;"></div>
<div style="left:227px;top:278px;width:847px;height:356px;background:#fff;"></div>
<div style="left:227px;top:278px;width:846px;height:18px;background:#dfdfdf;border-top:1px solid #f8f8f8;border-bottom:1px solid #cacaca;"></div>
<div style="left:227px;top:296px;width:847px;height:1px;background:#7a7a7a;"></div>
<div style="left:244px;top:278px;width:1px;height:18px;background:#868686;"></div>
<div style="left:245px;top:279px;width:1px;height:17px;background:#f8f8f8;"></div>
<div style="left:264px;top:280px;width:1px;height:16px;background:#868686;"></div>
<div style="left:265px;top:280px;width:1px;height:16px;background:#f8f8f8;"></div>
<div style="left:1073px;top:278px;width:1px;height:18px;background:#868686;"></div>
<div style="left:227px;top:279px;width:1px;height:17px;background:#f8f8f8;"></div>
<span class="t" style="left:252.7px;top:281px;font-size:12px;color:#000;">1</span>
<div style="left:227px;top:297px;width:17px;height:14px;background:#c0c0c0;"></div>
<div style="left:244px;top:297px;width:21px;height:15px;background:#fff;border-right:1px solid #c8c8c8;border-bottom:1px solid #c8c8c8;"></div>
<span class="t" style="left:228.5px;top:298px;font-size:12px;color:#000;">1</span>
<span class="t" style="left:246.8px;top:298px;font-size:12px;color:#000;">3</span>
<div style="left:1074px;top:278px;width:16px;height:19px;background:#dfdfdf;"></div>
<div style="left:1074px;top:297px;width:16px;height:337px;background:#808080;"></div>
<div class="btn" style="left:1075px;top:297px;width:14px;height:15px;"></div>
<div class="trk" style="left:1075px;top:313px;width:14px;height:305px;"></div>
<div class="btn" style="left:1075px;top:619px;width:14px;height:14px;"></div>
<svg style="left:1078px;top:302px" width="9" height="5" viewBox="0 0 9 5"><path d="M0 4.6 H8.4 L4.2 0 Z" fill="#000"/></svg>
<svg style="left:1078px;top:624px" width="9" height="5" viewBox="0 0 9 5"><path d="M0 0 H8.4 L4.2 4.6 Z" fill="#000"/></svg>
<div style="left:224px;top:636px;width:868px;height:1px;background:#fff;"></div>
<div style="left:224px;top:637px;width:868px;height:22px;background:#c0c0c0;"></div>
<div style="left:224px;top:659px;width:870px;height:2px;background:#fff;"></div>
<div style="left:229px;top:643px;width:11px;height:11px;background:linear-gradient(#aeaeae,#8e8e8e);border:1px solid #b4b4b4;box-shadow:inset 0 0 0 1px #dedede;border-radius:1px;"></div>
<span class="t" style="left:267.8px;top:643px;font-size:10px;color:#000;letter-spacing:-0.461px;">19:49:59:342</span>
<span class="t" style="left:333.8px;top:643px;font-size:10px;color:#000;letter-spacing:-0.236px;">Closing Results Done.</span>
<svg style="left:248px;top:639px" width="12" height="17" viewBox="336 84 12 17"><path d="M340 92.5 L344.8 89 L346.8 92 L346.8 94 L342.6 98 L340.8 96.3 L342.2 94.6 Z" fill="#f2ea5c" stroke="#34448c" stroke-width="0.9" stroke-dasharray="1.2 0.8" stroke-linejoin="round"/><path d="M340.4 92.6 L344.6 89.6 L346 92.2 L346 93.8 L342.6 96.8 L341.6 96 L343 94.4 Z" fill="#f2ea5c"/><path d="M343 85.3 L345 86.6 L345 88.6 L340.2 93 L337.3 91.2 L337.3 90 Z" fill="#e8f0b4" stroke="#94842c" stroke-width="1" stroke-linejoin="round"/><path d="M337.5 90.2 L340.2 91.6 L345 87.2" fill="none" stroke="#94842c" stroke-width="0.9"/><path d="M341 96.3 L342.8 98 L341 99.8 L339.2 98 Z" fill="#f8ec40" stroke="#34448c" stroke-width="0.8"/></svg>
<div style="left:0px;top:660px;width:217px;height:1px;background:#fff;"></div>
<div style="left:0px;top:661px;width:1094px;height:1px;background:#707070;"></div>
<div style="left:0px;top:34px;width:1px;height:25px;background:#fff;"></div>
<div style="left:0px;top:60px;width:1px;height:18px;background:#c2c8d2;"></div>
<div style="left:0px;top:79px;width:1px;height:582px;background:#fff;"></div>
<svg style="left:0;top:0" width="1094" height="662" viewBox="0 0 1094 662"><defs>
<linearGradient id="gCyl" x1="0" y1="0" x2="1" y2="0"><stop offset="0" stop-color="#b4b07c"/><stop offset="0.35" stop-color="#fbfbee"/><stop offset="1" stop-color="#6e6c3c"/></linearGradient>
<linearGradient id="gCylS" x1="0" y1="0" x2="1" y2="0"><stop offset="0" stop-color="#f4f4f4"/><stop offset="0.5" stop-color="#d8d8d8"/><stop offset="1" stop-color="#a8a8b0"/></linearGradient>
<linearGradient id="gGrn" x1="0" y1="0" x2="0" y2="1"><stop offset="0" stop-color="#5cc06c"/><stop offset="0.5" stop-color="#3aa24c"/><stop offset="1" stop-color="#2e9040"/></linearGradient>
<linearGradient id="gGrnH" x1="0" y1="0" x2="1" y2="0"><stop offset="0" stop-color="#3aa24c"/><stop offset="0.5" stop-color="#5cc06c"/><stop offset="1" stop-color="#3aa24c"/></linearGradient>
<linearGradient id="gYel" x1="0" y1="0" x2="0" y2="1"><stop offset="0" stop-color="#fffbe0"/><stop offset="1" stop-color="#f6cc50"/></linearGradient>
<linearGradient id="gYelH" x1="0" y1="0" x2="1" y2="0"><stop offset="0" stop-color="#f6cc50"/><stop offset="0.5" stop-color="#fffbe0"/><stop offset="1" stop-color="#f6cc50"/></linearGradient>
<linearGradient id="gRed" x1="0" y1="0" x2="0" y2="1"><stop offset="0" stop-color="#f04858"/><stop offset="1" stop-color="#e01830"/></linearGradient>
<linearGradient id="gPink" x1="0" y1="0" x2="1" y2="1"><stop offset="0" stop-color="#f49a9a"/><stop offset="1" stop-color="#fde8e8"/></linearGradient>
<linearGradient id="gOF" x1="0" y1="0" x2="0" y2="1"><stop offset="0" stop-color="#fde6ae"/><stop offset="1" stop-color="#f4b858"/></linearGradient>
<linearGradient id="gBook" x1="0" y1="0" x2="0" y2="1"><stop offset="0" stop-color="#8cc0f4"/><stop offset="1" stop-color="#4c90dc"/></linearGradient>
<linearGradient id="gTeal" x1="0" y1="0" x2="0" y2="1"><stop offset="0" stop-color="#d0f0dc"/><stop offset="1" stop-color="#7cbcac"/></linearGradient>
<linearGradient id="gTbl" x1="0" y1="0" x2="1" y2="0"><stop offset="0" stop-color="#f08818"/><stop offset="1" stop-color="#fce060"/></linearGradient>
<linearGradient id="gNote" x1="0" y1="0" x2="1" y2="1"><stop offset="0" stop-color="#fff480"/><stop offset="1" stop-color="#f0c820"/></linearGradient>
<linearGradient id="gFlp" x1="0" y1="0" x2="0" y2="1"><stop offset="0" stop-color="#f0f0f0"/><stop offset="1" stop-color="#e0e0e0"/></linearGradient>
</defs><path d="M9.5 86.5 H16.5 L19.5 89.5 V99.5 H9.5 Z" fill="#fdfdfa" stroke="#707070"/><path d="M16.5 86.5 V89.5 H19.5 Z" fill="#c8dcf8" stroke="#707070" stroke-width="0.8"/><path d="M18.5 91 V98.5" stroke="#f4f0c8" stroke-width="1"/><path d="M30.5 98 V90 Q30.5 88.5 32 88.5 H35 Q36.5 88.5 36.5 90 V90.5 H41.5 V93.5" fill="#fbdc9c" stroke="#c07c1c"/><path d="M30.6 98.5 L33.8 92.5 H44.5 L41 98.5 Z" fill="url(#gOF)" stroke="#c07c1c" stroke-linejoin="round"/><g><rect x="53.5" y="86.5" width="14" height="14" rx="1" fill="url(#gFlp)" stroke="#b8b8b8"/><rect x="56.5" y="86.5" width="8" height="6" fill="#f8f8f8" stroke="#c8c8c8"/><rect x="57" y="91" width="7" height="1" fill="#dcdcdc"/><rect x="56.5" y="95.5" width="8" height="5" fill="#f2f2f2" stroke="#c0c0c0"/><rect x="58" y="97" width="2.5" height="3.5" fill="#cacaca"/></g><path d="M95.6 88.0 V98.0 A4.0 1.4 0 0 0 103.4 98.0 V88.0 A4.0 1.4 0 0 0 95.6 88.0 Z" fill="url(#gCylS)" stroke="#8c8400" stroke-width="1.25"/><path d="M95.6 88.0 A4.0 1.4 0 0 0 103.4 88.0" fill="none" stroke="#8c8400" stroke-width="1.0"/><path d="M88.5 91.5 H92.5 V88.5 L98 93.5 L92.5 98.5 V95.5 H88.5 Z" fill="#10c428" stroke="#0a6414" stroke-linejoin="round"/><path d="M112.6 92.6 V99.4 A3.0 1 0 0 0 118.4 99.4 V92.6 A3.0 1 0 0 0 112.6 92.6 Z" fill="url(#gCylS)" stroke="#8c8400" stroke-width="1.25"/><path d="M118.3 89.5 L122 86.2 V87.6 H126.2 V91.4 H122 V92.8 Z" fill="#ff0808" stroke="#18103c" stroke-width="0.9" stroke-linejoin="round"/><rect x="135.5" y="86.5" width="10" height="10" rx="1.5" fill="url(#gPink)" stroke="#e25454"/><rect x="139.5" y="90.5" width="10" height="10" rx="1.5" fill="#f29a9a" stroke="#dc4848"/><rect x="141" y="92" width="7" height="7" fill="url(#gRed)"/><path d="M158.6 92.6 V99.4 A3.0 1 0 0 0 164.4 99.4 V92.6 A3.0 1 0 0 0 158.6 92.6 Z" fill="url(#gCylS)" stroke="#8c8400" stroke-width="1.25"/><path d="M168.5 86.0 L169.7 88.3 L172.0 89.5 L169.7 90.7 L168.5 93.0 L167.3 90.7 L165.0 89.5 L167.3 88.3 Z" fill="#e4b830" stroke="#b8900c" stroke-width="1"/><path d="M168.5 87.9 V91.1 M166.9 89.5 H170.1" stroke="#fffad8" stroke-width="0.9"/><path d="M184.6 88.0 V98.0 A4.0 1.4 0 0 0 192.4 98.0 V88.0 A4.0 1.4 0 0 0 184.6 88.0 Z" fill="url(#gCyl)" stroke="#8c8400" stroke-width="1.25"/><path d="M184.6 88.0 A4.0 1.4 0 0 0 192.4 88.0" fill="none" stroke="#8c8400" stroke-width="1.0"/><ellipse cx="188.5" cy="88.3" rx="3.4" ry="1.3" fill="#fdfdf4"/><path d="M340 92.5 L344.8 89 L346.8 92 L346.8 94 L342.6 98 L340.8 96.3 L342.2 94.6 Z" fill="#f2ea5c" stroke="#34448c" stroke-width="0.9" stroke-dasharray="1.2 0.8" stroke-linejoin="round"/><path d="M340.4 92.6 L344.6 89.6 L346 92.2 L346 93.8 L342.6 96.8 L341.6 96 L343 94.4 Z" fill="#f2ea5c"/><path d="M343 85.3 L345 86.6 L345 88.6 L340.2 93 L337.3 91.2 L337.3 90 Z" fill="#e8f0b4" stroke="#94842c" stroke-width="1" stroke-linejoin="round"/><path d="M337.5 90.2 L340.2 91.6 L345 87.2" fill="none" stroke="#94842c" stroke-width="0.9"/><path d="M341 96.3 L342.8 98 L341 99.8 L339.2 98 Z" fill="#f8ec40" stroke="#34448c" stroke-width="0.8"/><rect x="359.5" y="86.5" width="12" height="7" fill="#eafaff" stroke="#c4b488"/><rect x="359.5" y="93.5" width="12" height="7" fill="#e6f2fc" stroke="#93a3c6"/><rect x="361" y="88" width="3" height="3" fill="#2ea04c"/><rect x="365" y="89" width="5" height="1" fill="#3ca45c"/><rect x="361" y="95.5" width="3" height="3" fill="#6470b0"/><rect x="365" y="96.5" width="5" height="1" fill="#6470b0"/><rect x="380.5" y="85.5" width="10" height="13" fill="#fff" stroke="#c8a050"/><path d="M380.5 85.5 V98.5 H390.5" fill="none" stroke="#a87c20" stroke-width="1.2"/><rect x="382" y="87" width="6" height="1" fill="#8ca0cc"/><rect x="382" y="89" width="6" height="1" fill="#8ca0cc"/><rect x="382" y="91" width="6" height="1" fill="#8ca0cc"/><rect x="382" y="93" width="6" height="1" fill="#8ca0cc"/><path d="M386.5 87.5 H389.5 Q392.5 87.5 392.5 90.5 V91.5 H395 L391 96 L387 91.5 H389.5 V90.5 H386.5 Z" fill="url(#gTeal)" stroke="#2060a8" stroke-linejoin="round"/><rect x="386.5" y="96.5" width="8" height="4" fill="#fff" stroke="#2c5ca8"/><rect x="388" y="98" width="1" height="1" fill="#2c5ca8"/><rect x="390" y="98" width="1" height="1" fill="#2c5ca8"/><rect x="392" y="98" width="1" height="1" fill="#2c5ca8"/><path d="M408.5 87.5 H415.5 L418.5 90.5 V100.5 H408.5 Z" fill="#fff" stroke="#b08c3c"/><path d="M415.5 87.5 V90.5 H418.5" fill="#f0d8a0" stroke="#b08c3c" stroke-width="0.8"/><rect x="414" y="92" width="3.5" height="1" fill="#8ca0cc"/><rect x="414" y="94" width="3.5" height="1" fill="#8ca0cc"/><rect x="414" y="96" width="3.5" height="1" fill="#8ca0cc"/><rect x="414" y="98" width="3.5" height="1" fill="#8ca0cc"/><rect x="404.5" y="85.5" width="8" height="4" fill="#fff" stroke="#2c5ca8"/><rect x="406" y="87" width="1" height="1" fill="#2c5ca8"/><rect x="408" y="87" width="1" height="1" fill="#2c5ca8"/><rect x="410" y="87" width="1" height="1" fill="#2c5ca8"/><path d="M405.5 90.5 Q405 96.2 410.5 96.3 V98.6 L414.8 94.6 L410.5 90.8 V93.2 Q408.2 93.4 408.2 90.5 Z" fill="url(#gTeal)" stroke="#2c64b0" stroke-width="1" stroke-linejoin="round"/><path d="M436 88.5 H439.5 V99.5 H432" fill="#f8f8f8" stroke="#707480" stroke-width="1"/><path d="M429.5 87 Q433 88 436.5 85.5 V97 Q433 99.5 429.5 98.5 Z" fill="url(#gBook)" stroke="#a89050" stroke-width="0.9"/><path d="M429.5 98.5 Q433 99.5 436.5 97" fill="none" stroke="#203050" stroke-width="1.2"/><path d="M431.5 92.5 L434.5 90.5" stroke="#f4e8d0" stroke-width="1.8" stroke-linecap="round"/><path d="M449.5 91.5 L457.5 86.5 L465 92.5 L456 98 Z" fill="url(#gBook)" stroke="#a89050" stroke-width="0.8"/><path d="M449.5 91.5 L456 98 V99.8 L449.5 93.5 Z" fill="#4c88d0" stroke="#3c78c0" stroke-width="0.6"/><path d="M456 98 L465 92.5 V94.5 L456 99.8 Z" fill="#fafafa" stroke="#8c9098" stroke-width="0.6"/><path d="M455.5 92.8 L458.5 91" stroke="#f4e8d0" stroke-width="1.8" stroke-linecap="round"/><rect x="476.5" y="86.5" width="8" height="3" rx="1.5" fill="#ece4c4" stroke="#6890d0"/><rect x="476.5" y="91.5" width="8" height="3" rx="1.5" fill="#fff0e8" stroke="#b05444"/><rect x="476.5" y="96.5" width="8" height="3" rx="1.5" fill="#d4e4ff" stroke="#5050e0"/><rect x="495" y="85" width="14" height="12" fill="#f0f0f0" opacity="0.45"/><rect x="496" y="86" width="12" height="2" fill="#0c52a0"/><rect x="496" y="90" width="12" height="2" fill="#0c52a0"/><rect x="496" y="94" width="5" height="2" fill="#0c52a0"/><path d="M502.5 93.5 Q503 96.5 506.5 96.5 V94.5 L510.8 97.5 L506.5 100.6 V99 Q502 99 502.5 93.5 Z" fill="#f6d040" stroke="#a87c08" stroke-linejoin="round"/><rect x="519" y="86" width="14" height="12" fill="#f0f0f0" opacity="0.45"/><rect x="520" y="87" width="12" height="2" fill="#0c52a0"/><rect x="520" y="91" width="12" height="2" fill="#0c52a0"/><rect x="525" y="95" width="7" height="2" fill="#0c52a0"/><path d="M521.5 94.0 L522.7 96.3 L525.0 97.5 L522.7 98.7 L521.5 101.0 L520.3 98.7 L518.0 97.5 L520.3 96.3 Z" fill="#e4b830" stroke="#b8900c" stroke-width="1"/><path d="M521.5 95.9 V99.1 M519.9 97.5 H523.1" stroke="#fffad8" stroke-width="0.9"/><rect x="542" y="86" width="14" height="12" fill="#f0f0f0" opacity="0.45"/><rect x="543" y="87" width="12" height="2" fill="#0c52a0"/><rect x="543" y="91" width="12" height="2" fill="#0c52a0"/><rect x="549" y="95" width="6" height="2" fill="#0c52a0"/><path d="M542.4 99.2 L551 91" stroke="#a87c3c" stroke-width="3.1" stroke-linecap="butt"/><path d="M543.1999999999999 98.39999999999999 L550.6 91.4" stroke="#f8e4b4" stroke-width="1.8"/><path d="M541.0999999999999 100.5 L542.6999999999999 98.89999999999999" stroke="#1c2c5c" stroke-width="2.2"/><rect x="566" y="86" width="14" height="12" fill="#f0f0f0" opacity="0.45"/><rect x="567" y="87" width="12" height="2" fill="#0c52a0"/><rect x="567" y="91" width="12" height="2" fill="#0c52a0"/><rect x="572" y="95" width="7" height="2" fill="#0c52a0"/><path d="M565.5 93.5 L571.8 96.8 L565.5 100.2 Z" fill="#48b064" stroke="#1e8c40" stroke-linejoin="round"/><rect x="590.5" y="87.5" width="12" height="11" fill="#f4fcff" stroke="#b09444"/><rect x="591" y="88" width="11" height="2" fill="url(#gTbl)"/><path d="M591 93.5 H602 M598.5 90 V98" stroke="#c8b474" stroke-width="1"/><path d="M588.5 91.5 H593.5 V89.5 L598.5 93.5 L593.5 97.5 V95.5 H588.5 Z" fill="url(#gYel)" stroke="#c47c10" stroke-linejoin="round"/><path d="M624.5 90.5 H631 V87.5 L638 93 L631 98.5 V95.5 H624.5 Z" fill="url(#gGrn)" stroke="#1e7030" stroke-linejoin="round"/><path d="M658.5 88 H652 V85.5 L646.3 89 L652 92.5 V90.5 H658.5 Z" fill="url(#gGrn)" stroke="#1e7030" stroke-linejoin="round" stroke-width="0.9"/><path d="M649.5 95 H656 V92.5 L661.7 96 L656 99.8 V97.5 H649.5 Z" fill="url(#gGrn)" stroke="#1e7030" stroke-linejoin="round" stroke-width="0.9"/><path d="M674.5 86.5 H680.5 V93 H683 L677.5 99.5 L671.5 93 H674.5 Z" fill="url(#gGrnH)" stroke="#1e7030" stroke-linejoin="round"/><path d="M697.5 99.5 H703.5 V93 H706 L700.5 86.3 L694.5 93 H697.5 Z" fill="url(#gGrnH)" stroke="#1e7030" stroke-linejoin="round"/><rect x="730.5" y="85.5" width="10" height="14" rx="1" fill="#fcfcfc" stroke="#b4b4b4"/><path d="M731 85.5 H741 M731 87.5 H741" stroke="#8c8c8c" stroke-width="1" stroke-dasharray="1 1"/><path d="M733.2 92.6 L736.4 95.8 L742.2 89.6" fill="none" stroke="#949494" stroke-width="2.3"/><path d="M765.5 90.5 H758.5 V87.3 L752.4 93 L758.5 98.6 V95.5 H765.5 Z" fill="#aeaeae" stroke="#8e8e8e" stroke-linejoin="round"/><rect x="829.5" y="88.5" width="14" height="12" fill="#f2fcff" stroke="#94742c"/><path d="M829.5 100.5 H843.5" stroke="#6c5c2c" stroke-width="1"/><rect x="829" y="86" width="15" height="3" fill="#3c7cd4"/><path d="M830 86 H837.5 L838.5 88.5 H829 V87 Z" fill="#1c4c9c"/><rect x="839" y="87" width="4" height="1" fill="#d0e4fc"/><rect x="832" y="91" width="9" height="1" fill="#8c98cc"/><rect x="832" y="93" width="9" height="1" fill="#8c98cc"/><rect x="832" y="95" width="5" height="1" fill="#8c98cc"/><circle cx="948" cy="91" r="2" fill="#f4fbf4" stroke="#206c30" stroke-width="1.1"/><circle cx="953.2" cy="91" r="2" fill="#f4fbf4" stroke="#206c30" stroke-width="1.1"/><path d="M946.3 90 Q947 86.5 950 86.6 M952 89.2 Q953.5 87 956 87 Q957.6 87.4 957.6 89.4" fill="none" stroke="#206c30" stroke-width="1"/><path d="M951.5 94.5 H956 V92.4 L961 96 L956 99.8 V97.5 H951.5 Z" fill="#d0ecb4" stroke="#2cac3c" stroke-width="1.1" stroke-linejoin="round"/><rect x="970.6" y="86.6" width="10.8" height="12.8" fill="#f6f9fc" stroke="#a08434" stroke-width="1.3"/><path d="M972.5 88 V98 M972.5 91.5 H978 M972.5 94.5 H978 M972.5 97.5 H978" stroke="#2c9450" stroke-width="1" fill="none"/><rect x="979" y="91" width="1" height="1" fill="#2c9450"/><rect x="979" y="94" width="1" height="1" fill="#2c9450"/><rect x="979" y="97" width="1" height="1" fill="#2c9450"/><g><rect x="280.5" y="257.5" width="14" height="14" rx="1" fill="url(#gFlp)" stroke="#b8b8b8"/><rect x="283.5" y="257.5" width="8" height="6" fill="#f8f8f8" stroke="#c8c8c8"/><rect x="284" y="262" width="7" height="1" fill="#dcdcdc"/><rect x="283.5" y="266.5" width="8" height="5" fill="#f2f2f2" stroke="#c0c0c0"/><rect x="285" y="268" width="2.5" height="3.5" fill="#cacaca"/></g><rect x="307" y="257" width="14" height="12" fill="#f0f0f0" opacity="0.45"/><rect x="308" y="258" width="12" height="2" fill="#0c52a0"/><rect x="308" y="262" width="12" height="2" fill="#0c52a0"/><rect x="314" y="266" width="6" height="2" fill="#0c52a0"/><path d="M307.40000000000003 270.2 L316 262" stroke="#a87c3c" stroke-width="3.1" stroke-linecap="butt"/><path d="M308.2 269.40000000000003 L315.6 262.4" stroke="#f8e4b4" stroke-width="1.8"/><path d="M306.1 271.5 L307.7 269.90000000000003" stroke="#1c2c5c" stroke-width="2.2"/><path d="M349 261 L352.8 257.2 L352.8 259.3 Q357.6 259 357.6 265.8 L355.2 262.9 Q354 262.3 352.8 262.7 L352.8 264.7 Z" fill="#d6f0da" stroke="#08b020" stroke-width="1.25" stroke-linejoin="round"/><path d="M349 261 L352.8 257.2 L352.8 259.3 Q357.6 259 357.6 265.8 L355.2 262.9 Q354 262.3 352.8 262.7 L352.8 264.7 Z" transform="rotate(180 351 264.5)" fill="#d6f0da" stroke="#08b020" stroke-width="1.25" stroke-linejoin="round"/><rect x="367.6" y="263.4" width="5" height="4.2" rx="1.4" fill="#fff" stroke="#fff" stroke-width="3"/><rect x="374.8" y="263.4" width="5.4" height="4.2" rx="1.4" fill="#fff" stroke="#fff" stroke-width="3"/><path d="M372.6 264.4 H374.8 M367.8 263.8 L370.6 259.9 Q372 258.8 373 260.2 L373.3 261.8 M379.4 263.6 L381 260.6 Q382 259.6 382.8 260.6 L382.9 262.4" fill="none" stroke="#fff" stroke-width="3"/><rect x="367.6" y="263.4" width="5" height="4.2" rx="1.4" fill="#eef6ff" stroke="#1c3c6c" stroke-width="1.2"/><rect x="374.8" y="263.4" width="5.4" height="4.2" rx="1.4" fill="#eef6ff" stroke="#1c3c6c" stroke-width="1.2"/><path d="M372.6 264.4 H374.8 M367.8 263.8 L370.6 259.9 Q372 258.8 373 260.2 L373.3 261.8 M379.4 263.6 L381 260.6 Q382 259.6 382.8 260.6 L382.9 262.4" fill="none" stroke="#1c3c6c" stroke-width="1.2"/><path d="M393.1 265.9 L401.5 257.5" stroke="#a87c3c" stroke-width="3.1" stroke-linecap="butt"/><path d="M393.9 265.1 L401.1 257.9" stroke="#f8e4b4" stroke-width="1.8"/><path d="M391.8 267.2 L393.4 265.6" stroke="#1c2c5c" stroke-width="2.2"/><path d="M397.5 265.5 H402 V263.3 L407 267 L402 270.8 V268.5 H397.5 Z" fill="url(#gTeal)" stroke="#2c70b4" stroke-linejoin="round"/><path d="M416.5 263 H419.5 V261.3 L423.3 264.3 L419.5 267.5 V265.8 H416.5 Z" fill="#fce890" stroke="#c89010" stroke-linejoin="round"/><path d="M425.5 260 V269 H428 M425.5 264.5 H428 M425.5 260.5 H428" stroke="#5474b4" fill="none"/><rect x="428.5" y="259.5" width="2.5" height="2" fill="#dce4f4" stroke="#5474b4"/><rect x="428.5" y="263.5" width="2.5" height="2" fill="#dce4f4" stroke="#5474b4"/><rect x="428.5" y="267.5" width="2.5" height="2" fill="#dce4f4" stroke="#5474b4"/><path d="M442.2 257.5 V261.75 H440.5 L444.0 266.0 L447.5 261.75 H445.8 V257.5 Z" fill="url(#gYelH)" stroke="#c48c08" stroke-width="1" stroke-linejoin="round"/><path d="M449.3375 271.0 V266.75 H447.5 L451.25 262.5 L455.0 266.75 H453.1625 V271.0 Z" fill="url(#gYelH)" stroke="#c48c08" stroke-width="1" stroke-linejoin="round"/><path d="M468.5 258.5 H475.5 L478.5 261.5 V271.5 H468.5 Z" fill="#fff" stroke="#b08c3c"/><path d="M475.5 258.5 V261.5 H478.5" fill="#f0d8a0" stroke="#b08c3c" stroke-width="0.8"/><rect x="474" y="263" width="3.5" height="1" fill="#8ca0cc"/><rect x="474" y="265" width="3.5" height="1" fill="#8ca0cc"/><rect x="474" y="267" width="3.5" height="1" fill="#8ca0cc"/><rect x="474" y="269" width="3.5" height="1" fill="#8ca0cc"/><rect x="464.5" y="256.5" width="8" height="4" fill="#fff" stroke="#2c5ca8"/><rect x="466" y="258" width="1" height="1" fill="#2c5ca8"/><rect x="468" y="258" width="1" height="1" fill="#2c5ca8"/><rect x="470" y="258" width="1" height="1" fill="#2c5ca8"/><path d="M465.5 261.5 Q465 267.2 470.5 267.3 V269.6 L474.8 265.6 L470.5 261.8 V264.2 Q468.2 264.4 468.2 261.5 Z" fill="url(#gTeal)" stroke="#2c64b0" stroke-width="1" stroke-linejoin="round"/><rect x="488" y="257" width="14" height="12" fill="#f0f0f0" opacity="0.45"/><rect x="489" y="258" width="12" height="2" fill="#0c52a0"/><rect x="489" y="262" width="12" height="2" fill="#0c52a0"/><rect x="495" y="266" width="6" height="2" fill="#0c52a0"/><path d="M490.5 265.0 L491.7 267.3 L494.0 268.5 L491.7 269.7 L490.5 272.0 L489.3 269.7 L487.0 268.5 L489.3 267.3 Z" fill="#e4b830" stroke="#b8900c" stroke-width="1"/><path d="M490.5 266.9 V270.1 M488.9 268.5 H492.1" stroke="#fffad8" stroke-width="0.9"/><rect x="513.5" y="257.5" width="12" height="7" fill="#eafaff" stroke="#c4b488"/><rect x="513.5" y="264.5" width="12" height="7" fill="#e6f2fc" stroke="#93a3c6"/><rect x="515" y="259" width="3" height="3" fill="#2ea04c"/><rect x="519" y="260" width="5" height="1" fill="#3ca45c"/><rect x="515" y="266.5" width="3" height="3" fill="#6470b0"/><rect x="519" y="267.5" width="5" height="1" fill="#6470b0"/><rect x="536.5" y="257.5" width="13" height="13" fill="#f2f2fa" stroke="#7484b4"/><path d="M537 258 H542 L537 263 Z" fill="#1c3c7c"/><rect x="542" y="263" width="6" height="1" fill="#8c9cc4"/><rect x="542" y="265" width="6" height="1" fill="#8c9cc4"/><rect x="542" y="267" width="6" height="1" fill="#8c9cc4"/><path d="M560.5 257.5 H566 L568.5 260 V269.5 H560.5 Z" fill="#fbfbff" stroke="#bca878"/><rect x="562" y="260" width="3" height="1" fill="#5c78b4"/><rect x="562" y="262" width="3" height="1" fill="#5c78b4"/><rect x="562" y="264" width="3" height="1" fill="#5c78b4"/><rect x="562" y="266" width="3" height="1" fill="#5c78b4"/><rect x="562" y="268" width="3" height="1" fill="#5c78b4"/><path d="M565.5 259.5 H571.5 L574.5 262.5 V271.5 H565.5 Z" fill="#fff" stroke="#b09860"/><rect x="567" y="262" width="6" height="1" fill="#4464a8"/><rect x="567" y="264" width="6" height="1" fill="#4464a8"/><rect x="567" y="266" width="6" height="1" fill="#4464a8"/><rect x="567" y="268" width="6" height="1" fill="#4464a8"/><rect x="567" y="270" width="6" height="1" fill="#4464a8"/><rect x="583.5" y="257.5" width="7" height="7" fill="#fbf8ec" stroke="#bca878"/><rect x="592.5" y="262.5" width="6" height="8" fill="#fbf8ec" stroke="#bca878"/><rect x="585" y="259" width="1" height="1" fill="#3c5ca8"/><rect x="587" y="259" width="2" height="1" fill="#3c5ca8"/><rect x="594" y="264" width="1" height="1" fill="#3c5ca8"/><rect x="596" y="264" width="2" height="1" fill="#3c5ca8"/><rect x="585" y="261" width="1" height="1" fill="#3c5ca8"/><rect x="587" y="261" width="2" height="1" fill="#3c5ca8"/><rect x="594" y="266" width="1" height="1" fill="#3c5ca8"/><rect x="596" y="266" width="2" height="1" fill="#3c5ca8"/><rect x="585" y="263" width="1" height="1" fill="#3c5ca8"/><rect x="587" y="263" width="2" height="1" fill="#3c5ca8"/><rect x="594" y="268" width="1" height="1" fill="#3c5ca8"/><rect x="596" y="268" width="2" height="1" fill="#3c5ca8"/><path d="M592 257.5 Q596 257.5 596 260.5 M594.5 259.5 L596 261.2 L597.6 259.5" fill="none" stroke="#3458a8" stroke-width="1.1"/><path d="M590.5 271 Q586.5 271 586.5 267.5 M585 269 L586.5 267 L588.2 269" fill="none" stroke="#3458a8" stroke-width="1.1"/><path d="M624 264 L628.5 270.4 L627.4 271.2 L621.2 271.2 L620.1 268.8 Z" fill="#fffbd8" stroke="#f6c248" stroke-width="0.8" stroke-linejoin="round"/><path d="M622 269 L626.5 270.6 L624.5 266 Z" fill="#ffffff"/><path d="M624 264 L628.1 261.8 L631.1 265.9 L628.5 270.4 Z" fill="#a6a2aa" stroke="#a87c3c" stroke-width="0.9" stroke-linejoin="round"/><path d="M628.1 261.8 L632 257 L635.8 257.4 L636 260.7 L631.1 265.9 Z" fill="#fbe6a4" stroke="#f0a020" stroke-width="1.1" stroke-linejoin="round"/><rect x="631.2" y="259.2" width="1.3" height="1.3" fill="#2c4ca0"/><rect x="632.4" y="258.4" width="1" height="1" fill="#2c4ca0"/><path d="M795.5 261.5 H802 V258.5 L809 264 L802 269.6 V266.5 H795.5 Z" fill="url(#gYel)" stroke="#c88810" stroke-linejoin="round"/><path d="M820.5 260.5 H826.5 V257.5 L833 263 L826.5 268.5 V265.5 H824.5" fill="url(#gYel)" stroke="#c88810" stroke-linejoin="round"/><path d="M822.5 261 V269 M820.3 267 L822.5 270.5 L824.8 267" fill="none" stroke="#7c848c" stroke-width="1.3"/><path d="M851.5 256.5 H855.5 L858 259 V264.5 H851.5 Z" fill="#fff" stroke="#b09860"/><rect x="853" y="258" width="1.5" height="5" fill="#6c8cc8"/><rect x="855.5" y="260" width="1" height="3" fill="#6c8cc8"/><rect x="844.5" y="265.5" width="9.5" height="5" fill="#fff" stroke="#2c60b0" stroke-width="1.2"/><rect x="846.5" y="267.5" width="5" height="1" fill="#2c60b0"/><path d="M842.5 266 Q842 261.5 846.5 261.5 V259.3 L850.8 262.8 L846.5 266.3 V264.2 Q844.5 264 844.8 266 Z" fill="#74c04c" stroke="#2c8c20" stroke-linejoin="round"/><path d="M868.5 258.5 H878.5 V268 L875.5 271.5 H868.5 Z" fill="url(#gNote)" stroke="#a47410"/><path d="M869.5 257.5 H877.5" stroke="#3c3c3c" stroke-width="1.6" stroke-dasharray="1 1"/><rect x="870" y="261" width="6" height="1" fill="#6c7ca8"/><rect x="870" y="263" width="6" height="1" fill="#6c7ca8"/><rect x="870" y="265" width="6" height="1" fill="#6c7ca8"/><rect x="870" y="267" width="4" height="1" fill="#6c7ca8"/><path d="M878.8 257 L880.0 258.8 L881.8 260 L880.0 261.2 L878.8 263 L877.5999999999999 261.2 L875.8 260 L877.5999999999999 258.8 Z" fill="#e4b830" stroke="#b8900c" stroke-width="1"/><path d="M878.8 258.4 V261.6 M877.1999999999999 260 H880.4" stroke="#fffad8" stroke-width="0.9"/><rect x="891.5" y="257.5" width="11.5" height="11" rx="1" fill="#dce8f8" stroke="#6c8cc4"/><rect x="893.5" y="258" width="7.5" height="4" fill="#fbf8ec" stroke="#a8b8d8" stroke-width="0.6"/><rect x="894" y="260" width="6.5" height="1.5" fill="#f0d8a0"/><rect x="894.5" y="264.5" width="6" height="4" fill="#f4f8ff" stroke="#6c8cc4" stroke-width="0.8"/><rect x="896" y="266" width="2" height="2" fill="#f0c060"/><rect x="898" y="270" width="2" height="2" fill="#2858b8"/><rect x="901" y="270" width="2" height="2" fill="#2858b8"/><rect x="904" y="270" width="2" height="2" fill="#2858b8"/><path d="M919.5 257.5 H925 V264 H928 L922.2 270.5 L916.3 264 H919.5 Z" fill="url(#gYelH)" stroke="#c88810" stroke-linejoin="round"/><path d="M951 259 H944.5 V256.6 L938.6 260.2 L944.5 264 V261.5 H951 Z" fill="#fff0b0" stroke="#c88810" stroke-linejoin="round" stroke-width="0.9"/><path d="M942 266 H948.5 V263.6 L953.8 267.3 L948.5 271.2 V268.5 H942 Z" fill="#fff0b0" stroke="#c88810" stroke-linejoin="round" stroke-width="0.9"/></svg>
</div>
</body></html>
